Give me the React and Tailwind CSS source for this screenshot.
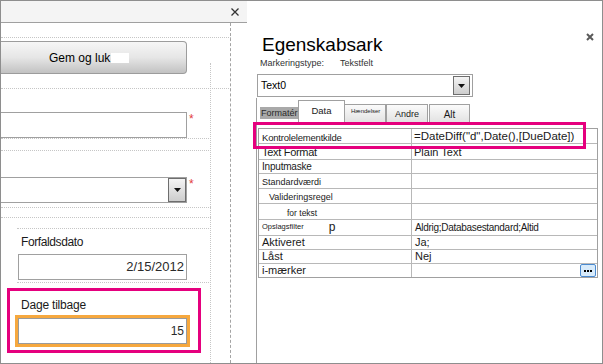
import React from 'react';

const Arrow = () => (
  <svg width="7" height="4" viewBox="0 0 7 4">
    <path d="M0 0h7L3.5 4z" fill="#111" />
  </svg>
);

const DropButton = ({ className }) => (
  <div className={`flex shrink-0 items-center justify-center border border-[#6e6e6e] bg-gradient-to-b from-[#f4f4f4] to-[#cdcdcd] ${className}`}>
    <Arrow />
  </div>
);

const Asterisk = () => (
  <span className="ml-[2px] mt-[1px] text-[12px] leading-none text-[#e23b3b]">*</span>
);

const rows = [
  { label: 'Kontrolelementkilde', labelCls: 'text-[9.5px] leading-[11px] tracking-[-0.2px]', value: '=DateDiff("d",Date(),[DueDate])', valueCls: 'text-[11.5px] leading-[13px]', h: 'h-[15px] items-end' },
  { label: 'Text Format', labelCls: 'text-[11px] leading-[13px] tracking-[-0.3px]', value: 'Plain Text', valueCls: 'text-[11px] leading-[13px]', h: 'h-[16px] items-end' },
  { label: 'Inputmaske', labelCls: 'text-[10px] leading-[12px] tracking-[-0.2px]', value: '', h: 'h-[14px] items-end' },
  { label: 'Standardværdi', labelCls: 'text-[9px] leading-[11px]', value: '', h: 'h-[15px] items-end' },
  { label: 'Valideringsregel', labelCls: 'pl-[10px] text-[9px] leading-[11px]', value: '', h: 'h-[15px] items-end' },
  { label: 'for tekst', labelCls: 'pl-[28px] text-[8.5px] leading-[11px]', value: '', h: 'h-[16px] items-end' },
];

const lower = [
  { label: 'Aktiveret', value: 'Ja;' },
  { label: 'Låst', value: 'Nej' },
];

function LeftCanvas() {
  return (
    <div className="flex w-[246px] shrink-0 flex-col">
      <div className="flex h-[22px] shrink-0 items-center justify-end border-b border-[#a0a0a0] bg-[#f4f4f4] pr-[8px]">
        <svg width="8" height="8" viewBox="0 0 8 8">
          <path d="M0.5 0.5l7 7M7.5 0.5l-7 7" stroke="#333" strokeWidth="1.3" />
        </svg>
      </div>

      <div className="relative flex-1">
        {/* design grid */}
        <div className="absolute left-0 top-[14px] w-[230px] border-t border-dotted border-[#c6c6c6]" />
        <div className="absolute left-0 top-[65px] w-[230px] border-t border-dotted border-[#c6c6c6]" />
        <div className="absolute left-0 top-[115px] w-[210px] border-t border-dotted border-[#c6c6c6]" />
        <div className="absolute left-0 top-[127px] w-[210px] border-t border-dotted border-[#c6c6c6]" />
        <div className="absolute left-0 top-[184px] w-[210px] border-t border-dotted border-[#c6c6c6]" />
        <div className="absolute left-0 top-[194px] w-[210px] border-t border-dotted border-[#c6c6c6]" />
        <div className="absolute left-[16px] top-[205px] w-[194px] border-t border-dotted border-[#c6c6c6]" />
        <div className="absolute left-[16px] top-[259px] w-[194px] border-t border-dotted border-[#c6c6c6]" />
        <div className="absolute bottom-0 left-[209px] top-[40px] border-l border-dotted border-[#c6c6c6]" />
        <div className="absolute bottom-0 left-[229px] top-0 border-l border-dashed border-[#a4a4a4]" />

        <div className="mt-[18px] flex h-[33px] w-[186px] items-center rounded-r-[4px] border border-l-0 border-[#9c9c9c] bg-gradient-to-b from-[#f6f6f6] via-[#e6e6e6] to-[#c2c2c2] pl-[48px] text-[12px] text-black">
          Gem og luk
          <span className="ml-[1px] h-[10px] w-[18px] bg-white" />
        </div>

        <div className="mt-[38px] flex items-start">
          <div className="h-[26px] w-[186px] border border-l-0 border-[#a0a0a0] bg-white" />
          <Asterisk />
        </div>

        <div className="mt-[39px] flex items-start">
          <div className="flex h-[26px] w-[186px] items-center justify-end border border-l-0 border-[#a0a0a0] bg-white">
            <DropButton className="h-[24px] w-[18px]" />
          </div>
          <Asterisk />
        </div>

        <div className="mt-[32px] h-[14px] pl-[20px] text-[12px] leading-[14px] tracking-[-0.4px]">Forfaldsdato</div>
        <div className="ml-[17px] mt-[5px] flex h-[26px] w-[169px] items-center justify-end border border-[#a0a0a0] bg-white pr-[2px] text-[13px] text-[#2a2a2a]">
          2/15/2012
        </div>

        <div className="ml-[6px] mt-[8px] h-[65px] w-[194px] border-[3px] border-[#e5007e] pl-[11px] pt-[7px]">
          <div className="h-[14px] text-[12px] leading-[14px] tracking-[-0.2px]">Dage tilbage</div>
          <div className="ml-[-6px] mt-[3px] h-[32px] w-[175px] border-[3px] border-[#f6a83e]">
            <div className="flex h-full items-center justify-end border border-[#9a9a9a] bg-white pr-[2px] text-[12px] text-[#2a2a2a]">15</div>
          </div>
        </div>
      </div>
    </div>
  );
}

function PropertySheet() {
  return (
    <div className="flex flex-1 flex-col">
      <div className="mt-[33px] flex items-start justify-between pl-[15px] pr-[8px]">
        <div className="text-[19px] leading-[22px] text-black">Egenskabsark</div>
        <svg className="mt-[-1px]" width="8" height="8" viewBox="0 0 8 8">
          <path d="M1 1l6 6M7 1l-6 6" stroke="#5a5a5a" strokeWidth="2" />
        </svg>
      </div>
      <div className="mt-px flex h-[12px] pl-[13px] text-[9px] leading-[12px] text-[#333]">
        <span className="w-[80px]">Markeringstype:</span>
        <span>Tekstfelt</span>
      </div>
      <div className="ml-[10px] mt-[5px] flex h-[23px] w-[216px] items-center justify-between border border-[#a0a0a0] pl-[3px] pr-[2px] text-[10.5px] text-black">
        Text0
        <DropButton className="h-[19px] w-[17px]" />
      </div>

      <div className="ml-[9px] mt-px flex-1 border-l border-[#a0a0a0]">
        <div className="flex h-[24px] items-end pl-[1px]">
          <div className="mb-[3px] ml-[2px] flex h-[12px] w-[38px] items-center bg-[#a9a9a9] pl-px text-[9px] leading-none text-[#2a2a2a]">Formatér</div>
          <div className="flex h-[22px] w-[47px] justify-center border border-b-0 border-[#a0a0a0] bg-white pt-[5px] text-[9.5px] leading-none">Data</div>
          <div className="h-[18px] w-[41px] border border-l-0 border-b-0 border-[#a0a0a0] bg-gradient-to-b from-[#fbfbfb] to-[#e2e2e2] pl-[6px] pt-[3px] text-[6px] leading-none">Hændelser</div>
          <div className="flex h-[18px] w-[42px] justify-center border border-b-0 border-[#a0a0a0] bg-gradient-to-b from-[#fbfbfb] to-[#e2e2e2] pt-[5px] text-[9px] leading-none">Andre</div>
          <div className="ml-px flex h-[18px] w-[41px] justify-center border border-b-0 border-[#a0a0a0] bg-gradient-to-b from-[#fbfbfb] to-[#e2e2e2] pt-[5px] text-[10px] leading-none">Alt</div>
        </div>

        <div className="ml-px mt-[6px] w-[340px] border border-[#a0a0a0] text-[#1a1a1a]">
          {rows.map((r) => (
            <div key={r.label} className={`flex border-b border-[#b8b8b8] ${r.h}`}>
              <div className={`h-full w-[153px] shrink-0 border-r border-[#b8b8b8] pl-[3px] ${r.labelCls}`}>
                <div className="flex h-full items-end">{r.label}</div>
              </div>
              <div className={`flex h-full flex-1 items-end pl-[2px] ${r.valueCls || ''}`}>{r.value}</div>
            </div>
          ))}

          <div className="flex h-[16px] items-center border-b border-[#b8b8b8]">
            <div className="flex h-full w-[153px] shrink-0 items-center border-r border-[#b8b8b8] pl-[3px]">
              <span className="mb-[3px] text-[7.5px] leading-[9px]">Opslagsfilter</span>
              <span className="ml-[25px] text-[12px] leading-[13px]">p</span>
            </div>
            <div className="pl-[3px] text-[10px] leading-[12px] tracking-[-0.3px]">Aldrig;Databasestandard;Altid</div>
          </div>

          {lower.map((r) => (
            <div key={r.label} className="flex h-[14px] border-b border-[#b8b8b8] text-[11px] leading-[13px]">
              <div className="flex h-full w-[153px] shrink-0 items-end border-r border-[#b8b8b8] pl-[3px]">{r.label}</div>
              <div className="flex h-full flex-1 items-end pl-[3px]">{r.value}</div>
            </div>
          ))}

          <div className="flex h-[13px] text-[11px] leading-[13px]">
            <div className="flex h-full w-[153px] shrink-0 items-center border-r border-[#b8b8b8] pl-[3px]">i-mærker</div>
            <div className="flex h-full flex-1 items-center justify-end pr-px">
              <div className="flex h-[13px] w-[16px] items-center justify-center gap-[1px] rounded-[2px] border border-[#4a8ad0] bg-[#d8ebfb]">
                <span className="h-[2px] w-[2px] bg-black" />
                <span className="h-[2px] w-[2px] bg-black" />
                <span className="h-[2px] w-[2px] bg-black" />
              </div>
            </div>
          </div>
        </div>
      </div>
    </div>
  );
}

export default function App() {
  return (
    <div className="relative flex h-[364px] w-[603px] overflow-hidden border border-[#8e8e8e] bg-white font-['Liberation_Sans',Arial,sans-serif] text-[#1a1a1a]">
      <LeftCanvas />
      <PropertySheet />
      {/* highlight around the control source row */}
      <div className="pointer-events-none absolute left-[252px] top-[121px] h-[27px] w-[333px] border-[3px] border-[#e5007e]" />
    </div>
  );
}
